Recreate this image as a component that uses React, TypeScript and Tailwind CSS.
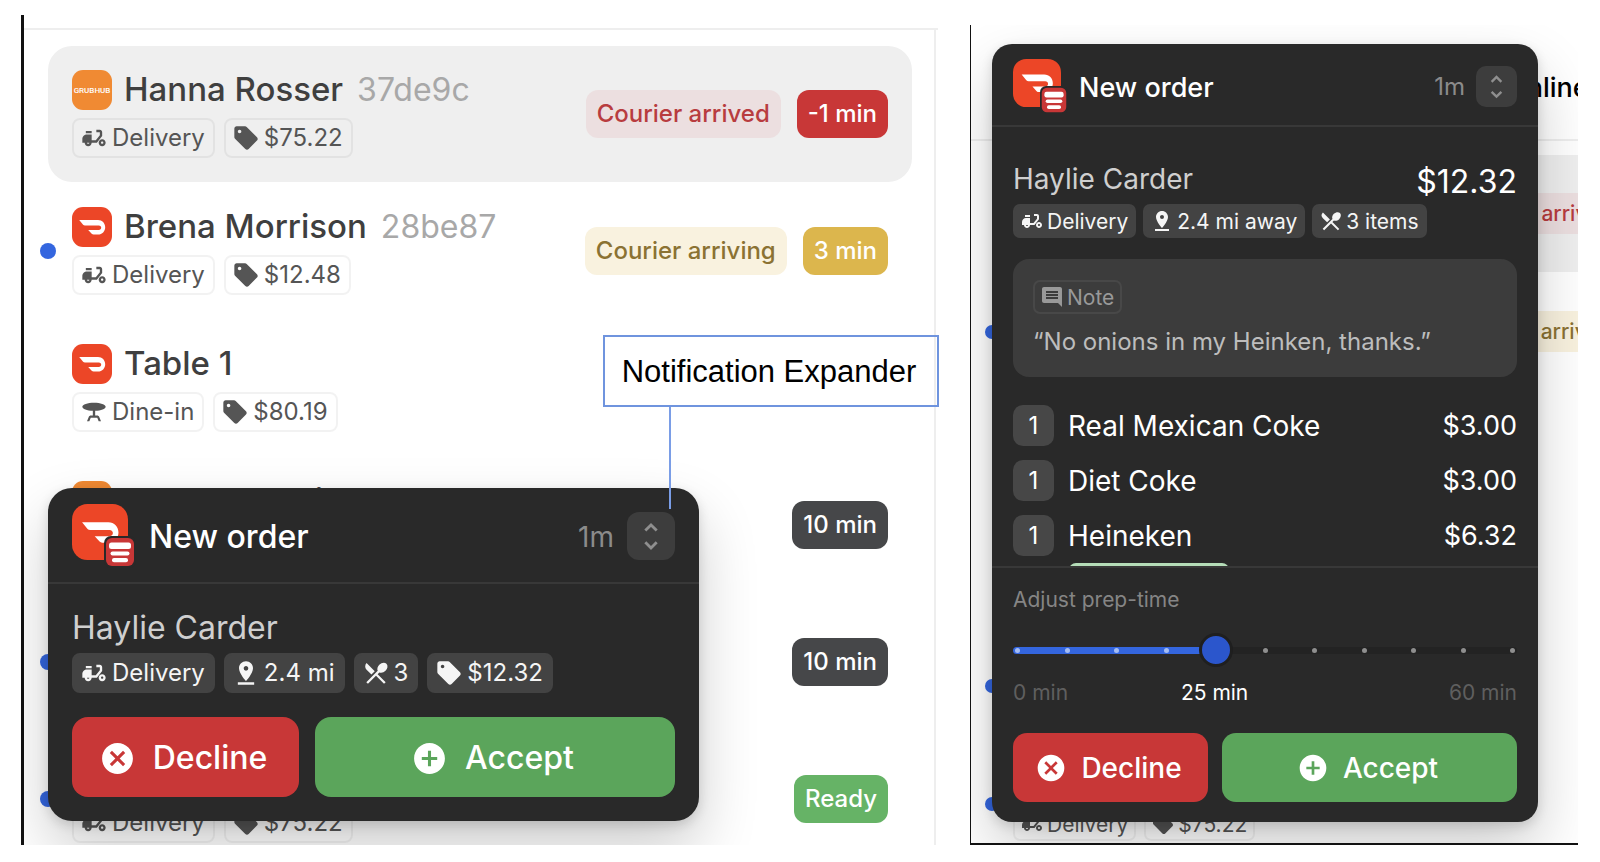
import { useState } from "react";
import type { ReactNode } from "react";
import {
  MdAddCircle,
  MdCancel,
  MdComment,
  MdDeliveryDining,
  MdLocalDining,
  MdPinDrop,
  MdSell,
  MdTableBar,
} from "react-icons/md";

type Size = "lg" | "md";
type Brand = "grubhub" | "doordash";
type Tone = "red" | "redSoft" | "amber" | "amberSoft" | "dark" | "green";

interface Order {
  name: string;
  code?: string;
  brand: Brand;
  kind: "Delivery" | "Dine-in";
  price: string;
  unread?: boolean;
  selected?: boolean;
  badges: { text: string; tone: Tone }[];
}

const orders: Order[] = [
  {
    name: "Hanna Rosser",
    code: "37de9c",
    brand: "grubhub",
    kind: "Delivery",
    price: "$75.22",
    selected: true,
    badges: [
      { text: "Courier arrived", tone: "redSoft" },
      { text: "-1 min", tone: "red" },
    ],
  },
  {
    name: "Brena Morrison",
    code: "28be87",
    brand: "doordash",
    kind: "Delivery",
    price: "$12.48",
    unread: true,
    badges: [
      { text: "Courier arriving", tone: "amberSoft" },
      { text: "3 min", tone: "amber" },
    ],
  },
  { name: "Table 1", brand: "doordash", kind: "Dine-in", price: "$80.19", badges: [] },
  {
    name: "Emerson Cain",
    brand: "grubhub",
    kind: "Delivery",
    price: "$24.10",
    badges: [{ text: "10 min", tone: "dark" }],
  },
  {
    name: "Table 4",
    brand: "doordash",
    kind: "Dine-in",
    price: "$31.60",
    unread: true,
    badges: [{ text: "10 min", tone: "dark" }],
  },
  {
    name: "Hanna Rosser",
    brand: "grubhub",
    kind: "Delivery",
    price: "$75.22",
    unread: true,
    badges: [{ text: "Ready", tone: "green" }],
  },
];

const toneClass: Record<Tone, string> = {
  red: "bg-[#c83737] text-white",
  redSoft: "bg-[#ecdfe0] text-[#b83c3f]",
  amber: "bg-[#dcb64d] text-white",
  amberSoft: "bg-[#f9f2df] text-[#8b7233]",
  dark: "bg-[#464749] text-white",
  green: "bg-[#66b366] text-white",
};

function DashMark({ className }: { className: string }) {
  return (
    <svg viewBox="0 0 40 40" className={className} aria-hidden="true">
      <rect width="40" height="40" rx="11" fill="#ec4627" />
      <path
        d="M7.2 13H26c4.200 0 7.200 3.200 7.200 7.300s-3 7.300-7.200 7.300h-4.400c-.8 0-1.400-.3-1.900-.8L16.200 23h10.600c1.500 0 2.400-1 2.400-2.200s-.9-2.200-2.400-2.200H13c-.8 0-1.400-.3-1.900-.8z"
        fill="#fff"
      />
    </svg>
  );
}

function BrandIcon({ brand, className }: { brand: Brand; className: string }) {
  if (brand === "doordash") return <DashMark className={className} />;
  return (
    <svg viewBox="0 0 40 40" className={className} role="img" aria-label="Grubhub">
      <rect width="40" height="40" rx="11" fill="#f08a33" />
      <text
        x="20"
        y="23"
        textAnchor="middle"
        fill="#fff"
        className="font-['Roboto',sans-serif] text-[8px] font-medium"
      >
        GRUBHUB
      </text>
    </svg>
  );
}

function Chip({
  size,
  look,
  icon,
  children,
}: {
  size: Size;
  look: "outline" | "solid" | "note";
  icon: ReactNode;
  children: ReactNode;
}) {
  const box =
    size === "lg"
      ? "h-10 gap-1 rounded-lg pl-1.5 pr-2 text-2xl"
      : "h-[34px] gap-[3px] rounded-[7px] pl-[5px] pr-[6px] text-[21px]";
  const color =
    look === "outline"
      ? "border-2 border-black/5 text-[#555]"
      : look === "solid"
        ? "border-2 border-[#434343] bg-[#434343] text-[#f5f5f5]"
        : "border-2 border-[#484848] text-[#999]";
  return (
    <span className={`flex items-center whitespace-nowrap leading-none ${box} ${color}`}>
      {icon}
      {children}
    </span>
  );
}

function OrderRow({ order, size }: { order: Order; size: Size }) {
  const lg = size === "lg";
  const glyph = lg ? "size-7" : "size-6";
  return (
    <li
      className={`relative flex items-center justify-between ${
        lg ? "h-[136px] rounded-3xl px-6" : "h-[117px] rounded-[20px] px-[21px]"
      } ${order.selected ? "bg-[#efefef]" : ""}`}
    >
      {order.unread && (
        <span
          className={`absolute top-1/2 -translate-y-1/2 rounded-full bg-[#3466df] ${
            lg ? "-left-2 size-4" : "-left-[7px] size-[14px]"
          }`}
        />
      )}
      <div className={`flex flex-col ${lg ? "gap-2" : "gap-[7px]"}`}>
        <div className={`flex items-center ${lg ? "h-10 gap-3" : "h-[34px] gap-[10px]"}`}>
          <BrandIcon brand={order.brand} className={lg ? "size-10" : "size-[34px]"} />
          <h3 className={`pb-[2px] font-medium leading-none text-[#3f3f3f] ${lg ? "text-[33px]" : "text-[28px]"}`}>
            {order.name}
          </h3>
          {order.code && (
            <span className={`leading-none text-[#a8a8a8] ${lg ? "ml-[2px] text-[32px]" : "ml-[2px] text-[28px]"}`}>
              {order.code}
            </span>
          )}
        </div>
        <div className={`flex ${lg ? "gap-[9px]" : "gap-2"}`}>
          <Chip
            size={size}
            look="outline"
            icon={order.kind === "Delivery" ? <MdDeliveryDining className={glyph} /> : <MdTableBar className={glyph} />}
          >
            {order.kind}
          </Chip>
          <Chip size={size} look="outline" icon={<MdSell className={glyph} />}>
            {order.price}
          </Chip>
        </div>
      </div>
      <div className={`flex ${lg ? "gap-4" : "gap-[14px]"}`}>
        {order.badges.map((badge) => (
          <span
            key={badge.text}
            className={`flex items-center whitespace-nowrap font-medium leading-none ${toneClass[badge.tone]} ${
              lg ? "h-12 rounded-xl px-[11px] text-2xl" : "h-[41px] rounded-[10px] px-[9px] text-[21px]"
            }`}
          >
            {badge.text}
          </span>
        ))}
      </div>
    </li>
  );
}

function OrderList({ size }: { size: Size }) {
  return (
    <ul className="flex flex-col gap-px">
      {orders.map((order, index) => (
        <OrderRow key={index} order={order} size={size} />
      ))}
    </ul>
  );
}

function NotificationHeader({ size }: { size: Size }) {
  const lg = size === "lg";
  return (
    <header
      className={`flex items-center border-b-2 border-[#383838] ${
        lg ? "h-24 px-6 pt-[2px]" : "h-[83px] px-[21px] pt-[3px]"
      }`}
    >
      <div className={`relative ${lg ? "-mt-2 mr-[21px] size-14" : "-mt-1.5 mr-[18px] size-12"}`}>
        <DashMark className="size-full" />
        <svg
          viewBox="0 0 32 32"
          className={`absolute ${lg ? "-bottom-2 -right-2 size-8" : "-bottom-[7px] -right-[7px] size-7"}`}
          aria-hidden="true"
        >
          <rect width="32" height="32" rx="7" fill="#292929" />
          <rect x="2" y="2" width="28" height="28" rx="6" fill="#c83737" />
          <rect x="5" y="6.500" width="22" height="6.500" rx="2.500" fill="#fff" />
          <rect x="6.500" y="15.500" width="19" height="4" rx="2" fill="#fff" />
          <rect x="8" y="22" width="16" height="4.200" rx="2" fill="#fff" />
        </svg>
      </div>
      <h2 className={`pt-[2px] font-medium leading-none text-white ${lg ? "text-[32px]" : "text-[27px]"}`}>
        New order
      </h2>
      <span
        className={`ml-auto pt-[2px] leading-none text-[#8b8b8b] ${lg ? "mr-[13px] text-[28px]" : "mr-[11px] text-2xl"}`}
      >
        1m
      </span>
      <button
        type="button"
        aria-label="Expand notification"
        className={`flex items-center justify-center bg-[#3d3d3d] text-[#8f8f8f] ${
          lg ? "size-12 rounded-xl" : "size-[41px] rounded-[10px]"
        }`}
      >
        <svg
          viewBox="0 0 48 48"
          className="size-full"
          fill="none"
          stroke="currentColor"
          strokeWidth="2.800"
          aria-hidden="true"
        >
          <path d="M18.300 18.600 24 12.900l5.700 5.700M18.300 30.200l5.700 5.700 5.700-5.700" />
        </svg>
      </button>
    </header>
  );
}

function Actions({ size }: { size: Size }) {
  const lg = size === "lg";
  const base = lg
    ? "h-20 gap-[17px] rounded-2xl pr-[5px] pt-[2px] text-[32px] [&>svg]:size-[37px]"
    : "h-[69px] gap-[14px] rounded-[14px] pr-1 text-[28px] [&>svg]:size-8";
  return (
    <div className={`flex ${lg ? "gap-4" : "gap-[14px]"}`}>
      <button
        type="button"
        className={`flex items-center justify-center bg-[#c83737] font-medium leading-none text-white ${base} ${
          lg ? "basis-[227px]" : "basis-[195px]"
        }`}
      >
        <MdCancel />
        Decline
      </button>
      <button
        type="button"
        className={`flex flex-1 items-center justify-center bg-[#5ba55b] font-medium leading-none text-white ${base}`}
      >
        <MdAddCircle />
        Accept
      </button>
    </div>
  );
}

function CompactNotification() {
  return (
    <section className="absolute left-6 top-[473px] w-[651px] rounded-3xl bg-[#292929] pb-6 shadow-[0_28px_60px_rgba(0,0,0,0.2),0_4px_12px_rgba(0,0,0,0.14)]">
      <NotificationHeader size="lg" />
      <div className="flex flex-col px-6 pt-6">
        <h3 className="h-[45px] text-[32px] leading-10 text-[#cfcfcf]">Haylie Carder</h3>
        <div className="mb-6 flex gap-[9px]">
          <Chip size="lg" look="solid" icon={<MdDeliveryDining className="size-7" />}>
            Delivery
          </Chip>
          <Chip size="lg" look="solid" icon={<MdPinDrop className="size-7" />}>
            2.4 mi
          </Chip>
          <Chip size="lg" look="solid" icon={<MdLocalDining className="size-7" />}>
            3
          </Chip>
          <Chip size="lg" look="solid" icon={<MdSell className="size-7" />}>
            $12.32
          </Chip>
        </div>
        <Actions size="lg" />
      </div>
    </section>
  );
}

const items = [
  { name: "Real Mexican Coke", price: "$3.00" },
  { name: "Diet Coke", price: "$3.00" },
  { name: "Heineken", price: "$6.32" },
];

function PrepTime() {
  const [step, setStep] = useState(4);
  const minutes = step === 4 ? 25 : step * 6;
  return (
    <div className="border-t-2 border-[#383838] px-[21px] pt-[18px]">
      <label htmlFor="prep" className="block text-[21px] leading-7 text-[#858585]">
        Adjust prep-time
      </label>
      <div className="relative mt-5 flex h-8 items-center">
        <div className="h-[7px] w-full overflow-hidden rounded-full bg-[#232323]">
          <div className="h-full bg-[#3466df]" style={{ width: `${step * 10}%` }} />
        </div>
        <div className="absolute inset-x-[2px] flex justify-between">
          {Array.from({ length: 11 }, (_, i) => (
            <span key={i} className={`size-[5px] rounded-full ${i < step ? "bg-[#a5bdf3]" : "bg-[#8f8f8f]"}`} />
          ))}
        </div>
        <input
          id="prep"
          type="range"
          min={0}
          max={10}
          value={step}
          aria-valuetext={`${minutes} min`}
          onChange={(event) => setStep(Number(event.target.value))}
          className="absolute -inset-x-3 h-9 cursor-pointer appearance-none bg-transparent [&::-webkit-slider-thumb]:size-[34px] [&::-webkit-slider-thumb]:appearance-none [&::-webkit-slider-thumb]:rounded-full [&::-webkit-slider-thumb]:border-[3px] [&::-webkit-slider-thumb]:border-[#1f1f1f] [&::-webkit-slider-thumb]:bg-[#2b56cc]"
        />
      </div>
      <div className="relative mt-[13px] flex justify-between text-[21px] leading-7 text-[#5f5f5f]">
        <span>0 min</span>
        <output htmlFor="prep" className="absolute -translate-x-1/2 text-white" style={{ left: `${step * 10}%` }}>
          {minutes} min
        </output>
        <span>60 min</span>
      </div>
    </div>
  );
}

function ExpandedNotification() {
  return (
    <section className="absolute left-[21px] top-[19px] w-[546px] rounded-[20px] bg-[#292929] pb-5 shadow-[0_28px_60px_rgba(0,0,0,0.2),0_4px_12px_rgba(0,0,0,0.14)]">
      <NotificationHeader size="md" />
      <div className="h-[439px] overflow-hidden px-[21px] pt-[34px]">
        <div className="flex h-[43px] items-start justify-between">
          <h3 className="text-[28px] leading-9 text-[#cfcfcf]">Haylie Carder</h3>
          <span className="text-[32px] leading-[42px] text-white">$12.32</span>
        </div>
        <div className="mb-[21px] flex gap-[7px]">
          <Chip size="md" look="solid" icon={<MdDeliveryDining className="size-6" />}>
            Delivery
          </Chip>
          <Chip size="md" look="solid" icon={<MdPinDrop className="size-6" />}>
            2.4 mi away
          </Chip>
          <Chip size="md" look="solid" icon={<MdLocalDining className="size-6" />}>
            3 items
          </Chip>
        </div>
        <div className="flex flex-col items-start gap-3 rounded-2xl bg-[#3c3c3c] px-5 pb-[19px] pt-[21px]">
          <Chip size="md" look="note" icon={<MdComment className="size-6" />}>
            Note
          </Chip>
          <p className="text-2xl leading-8 text-[#bdbdbd]">“No onions in my Heinken, thanks.”</p>
        </div>
        <ul className="mt-7 flex flex-col gap-[14px] text-[28px] leading-none text-white">
          {items.map((item) => (
            <li key={item.name} className="flex h-[41px] items-center">
              <span className="mr-[14px] flex size-[41px] items-center justify-center rounded-[10px] bg-[#474747] text-2xl leading-none">
                1
              </span>
              {item.name}
              <span className="ml-auto text-[27px]">{item.price}</span>
            </li>
          ))}
        </ul>
        <div className="ml-14 mt-[7px] h-8 w-[160px] rounded-[7px] bg-[#b5ddb8]" />
      </div>
      <PrepTime />
      <div className="px-[21px] pt-[26px]">
        <Actions size="md" />
      </div>
    </section>
  );
}

export default function App() {
  return (
    <div className="grid min-h-screen grid-cols-[917fr_608fr] items-start gap-8 bg-white pl-[21px] pr-[22px] pt-[15px] font-['Inter',sans-serif]">
      <div className="relative">
        <div className="relative max-h-[830px] overflow-hidden border-l-[3px] border-[#111] pt-[13px]">
          <div className="border-t-2 border-[#eee]">
            <div className="mr-[2px] border-r-2 border-[#eee] pl-6 pr-[22px] pt-4">
              <OrderList size="lg" />
            </div>
          </div>
          <CompactNotification />
        </div>
        <div className="absolute -right-px top-80 flex h-[72px] w-[336px] items-center justify-center border-2 border-[#6f94de] pr-1 font-['Liberation_Sans',sans-serif] text-[31px] leading-none text-black">
          Notification Expander
          <span className="absolute left-16 top-[70px] h-[102px] w-[2px] bg-[#7a9de6]" />
        </div>
      </div>
      <div className="relative mt-[10px] max-h-[820px] overflow-hidden border-b-2 border-l border-[#111]">
        <div className="w-[785px]">
          <div className="flex h-[116px] items-center border-b-2 border-[#eee] pb-[5px] pl-[535px] pt-[17px] text-[27px] font-medium text-black">
            Online
          </div>
          <div className="px-[21px] pt-[14px]">
            <OrderList size="md" />
          </div>
        </div>
        <ExpandedNotification />
      </div>
    </div>
  );
}
